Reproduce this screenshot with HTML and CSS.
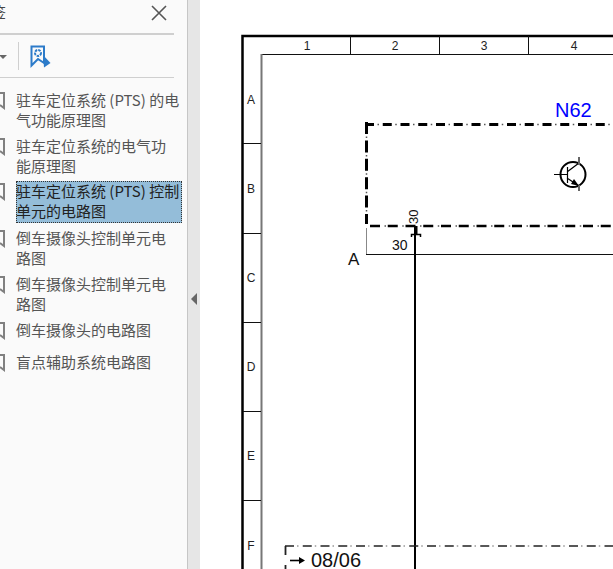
FILE: index.html
```html
<!DOCTYPE html>
<html lang="zh-CN">
<head>
  <meta charset="UTF-8">
  <title>书签</title>
  <link rel="stylesheet" href="styles.css">
</head>
<body>
  <div class="sidebar">
    <div class="panel-head">
      <span class="panel-title">书签</span>
      <svg class="close-icon" width="16" height="16" viewBox="0 0 16 16">
        <path d="M1 1L15 15M15 1L1 15"/>
      </svg>
    </div>
    <div class="panel-tools">
      <span class="caret"></span>
      <span class="tool-sep"></span>
      <svg class="add-mark" width="21" height="24" viewBox="0 0 21 24">
        <path class="ribbon" d="M1.5 1.5H14V18L8 14L1.5 20.5Z"/>
        <circle class="ribbon-gear" cx="8" cy="8" r="3"/>
        <path class="ribbon-arrow" d="M13 10L20.5 18L14 22.5Z"/>
      </svg>
    </div>
    <ul class="marks">
      <li class="mark">
        <svg class="mark-icon" width="5" height="18" viewBox="0 0 5 18"><path d="M-5 1H4V16L0 13"/></svg>
        <span class="mark-text">驻车定位系统 (PTS) 的电气功能原理图</span>
      </li>
      <li class="mark">
        <svg class="mark-icon" width="5" height="18" viewBox="0 0 5 18"><path d="M-5 1H4V16L0 13"/></svg>
        <span class="mark-text">驻车定位系统的电气功能原理图</span>
      </li>
      <li class="mark selected">
        <svg class="mark-icon" width="5" height="18" viewBox="0 0 5 18"><path d="M-5 1H4V16L0 13"/></svg>
        <span class="mark-text">驻车定位系统 (PTS) 控制单元的电路图</span>
      </li>
      <li class="mark">
        <svg class="mark-icon" width="5" height="18" viewBox="0 0 5 18"><path d="M-5 1H4V16L0 13"/></svg>
        <span class="mark-text">倒车摄像头控制单元电路图</span>
      </li>
      <li class="mark">
        <svg class="mark-icon" width="5" height="18" viewBox="0 0 5 18"><path d="M-5 1H4V16L0 13"/></svg>
        <span class="mark-text">倒车摄像头控制单元电路图</span>
      </li>
      <li class="mark">
        <svg class="mark-icon" width="5" height="18" viewBox="0 0 5 18"><path d="M-5 1H4V16L0 13"/></svg>
        <span class="mark-text">倒车摄像头的电路图</span>
      </li>
      <li class="mark">
        <svg class="mark-icon" width="5" height="18" viewBox="0 0 5 18"><path d="M-5 1H4V16L0 13"/></svg>
        <span class="mark-text">盲点辅助系统电路图</span>
      </li>
    </ul>
  </div>

  <div class="splitter"><span class="collapse"></span></div>

  <div class="viewer">
    <!-- viewBox starts at x=200 so drawing coords are the same as the window -->
    <svg class="sheet" width="413" height="569" viewBox="200 0 413 569">
      <path class="frame" d="M242.5 569V36H613"/>
      <path class="frame-thin" d="M261 54.5H613"/>
      <path class="frame-gray" d="M261.5 54V569"/>
      <path class="tick" d="M350.5 36V54M439.5 36V54M528.5 36V54"/>
      <path class="tick" d="M243 143.5H261M243 233.5H261M243 322.5H261M243 411.5H261M243 500.5H261"/>

      <text class="ruler" x="307" y="50">1</text>
      <text class="ruler" x="395" y="50">2</text>
      <text class="ruler" x="484" y="50">3</text>
      <text class="ruler" x="574" y="50">4</text>
      <text class="ruler" x="251" y="104">A</text>
      <text class="ruler" x="251" y="193">B</text>
      <text class="ruler" x="251" y="282">C</text>
      <text class="ruler" x="251" y="371">D</text>
      <text class="ruler" x="251" y="460">E</text>
      <text class="ruler" x="251" y="550">F</text>

      <!-- N62 box: dashes and the thin dots between them are separate strokes -->
      <path class="box-top" d="M365 124.5H613"/>
      <path class="box-dots" d="M377.5 124.5H613"/>
      <path class="box-side" d="M366.5 122V224"/>
      <path class="box-dots-v" d="M366.5 136.5V224"/>
      <path class="box-bottom" d="M370 226H613"/>
      <path class="box-dots" d="M384.5 226H613"/>
      <path class="frame-gray-thin" d="M366.5 228V254"/>
      <path class="frame-thin" d="M366 254.5H613"/>

      <text class="label-blue" x="555" y="117">N62</text>
      <text class="label-a" x="348" y="265">A</text>
      <text class="label-30" x="392" y="250">30</text>
      <text class="label-30-v" transform="translate(418 224) rotate(-90)">30</text>

      <rect class="pin" x="414" y="226" width="3.5" height="8"/>
      <path class="pin-foot" d="M411.5 237V234.5H420.5V237"/>
      <path class="wire" d="M415 235V569"/>

      <circle class="tr-ring" cx="573" cy="174.5" r="12.5"/>
      <path class="tr-line" d="M554 174.5H567M567.5 167V183M567 172L579 163M567 178L579 186"/>
      <path class="tr-gray" d="M579 157V165M579 185V191"/>
      <path class="tr-head" d="M579 186L571 184L574 179Z"/>

      <path class="thin-top" d="M285 546H613"/>
      <path class="thin-dots" d="M297 546H613"/>
      <path class="thin-side" d="M285.5 546V569"/>
      <path class="arrow" d="M290 560.5H302"/>
      <path class="arrow-head" d="M299 557L305 560.5L299 564Z"/>
      <text class="label-sheet" x="311" y="567">08/06</text>
    </svg>
  </div>
</body>
</html>
```
FILE: styles.css
```css
html, body {
  margin: 0;
  height: 100%;
  overflow: hidden;
}
body {
  display: flex;
  width: 613px;
  height: 569px;
  background-color: white;
  font-family: "Noto Sans CJK SC", "Liberation Sans", sans-serif;
}
.sidebar {
  width: 187px;
  flex: none;
  overflow: hidden;
  background-color: #fafafa;
  border-right: 1px solid #c6c6c6;
  color: #555;
}
.panel-head {
  width: 174px;
  height: 35px;
  display: flex;
  align-items: center;
  justify-content: space-between;
  box-sizing: border-box;
  padding: 0 7px 8px 0;
  border-bottom: 2px solid #cfcfcf;
}
.panel-title {
  margin: 0 0 2px -24px;
  font-size: 15px;
  line-height: 24px;
  color: #444;
}
.close-icon path {
  fill: none;
  stroke: #555;
  stroke-width: 1.6;
}
.panel-tools {
  width: 174px;
  height: 43px;
  box-sizing: border-box;
  display: flex;
  align-items: center;
  border-bottom: 1px solid #cfcfcf;
}
.caret {
  width: 0;
  height: 0;
  margin-left: -1px;
  margin-top: 1px;
  border-left: 4px solid transparent;
  border-right: 4px solid transparent;
  border-top: 4px solid #666;
}
.tool-sep {
  width: 1px;
  height: 28px;
  margin-left: 11px;
  background-color: #cfcfcf;
}
.add-mark {
  margin-left: 11px;
  margin-top: 2px;
}
.ribbon {
  fill: none;
  stroke: #2c7bc9;
  stroke-width: 2;
}
.ribbon-gear {
  fill: none;
  stroke: #2c7bc9;
  stroke-width: 2;
  stroke-dasharray: 2.5 1;
}
.ribbon-arrow {
  fill: #2c7bc9;
}
.marks {
  list-style: none;
  margin: 0;
  padding: 12px 0 0;
}
.mark {
  display: flex;
  align-items: flex-start;
  min-height: 26px;
  margin-bottom: 6px;
}
.mark-icon {
  flex: none;
  margin: 2px 11px 0 0;
}
.mark-icon path {
  fill: none;
  stroke: #808080;
  stroke-width: 2;
}
.mark-text {
  width: 166px;
  box-sizing: border-box;
  padding-right: 1.5px;
  font-size: 15px;
  line-height: 20px;
  word-break: break-all;
}
.selected {
  margin-top: -1px;
  margin-bottom: 5px;
}
.selected .mark-text {
  height: 42px;
  background-color: #94bdd9;
  outline: 1px dotted #333;
  outline-offset: -1px;
  color: #222;
}
.splitter {
  width: 12px;
  flex: none;
  display: flex;
  align-items: flex-start;
  background-color: #e6e6e6;
}
.collapse {
  width: 0;
  height: 0;
  margin: 293px 0 0 3px;
  border-top: 6px solid transparent;
  border-bottom: 6px solid transparent;
  border-right: 6px solid #666;
}
.viewer {
  flex: 1;
  background-color: white;
}
.sheet {
  display: block;
  font-family: "Liberation Sans", sans-serif;
}
.frame {
  fill: none;
  stroke: #000;
  stroke-width: 2.5;
}
.frame-thin {
  fill: none;
  stroke: #111;
  stroke-width: 1.2;
}
.frame-gray {
  fill: none;
  stroke: #777;
  stroke-width: 2;
}
.frame-gray-thin {
  fill: none;
  stroke: #888;
  stroke-width: 1;
}
.tick {
  fill: none;
  stroke: #111;
  stroke-width: 1;
}
.ruler {
  font-size: 12px;
  fill: #222;
  text-anchor: middle;
}
.box-top {
  fill: none;
  stroke: #000;
  stroke-width: 3;
  stroke-dasharray: 9 8.75;
}
.box-side {
  fill: none;
  stroke: #000;
  stroke-width: 3;
  stroke-dasharray: 12 6.4;
}
.box-bottom {
  fill: none;
  stroke: #000;
  stroke-width: 2.5;
  stroke-dasharray: 10 7.75;
}
.box-dots {
  fill: none;
  stroke: #555;
  stroke-width: 1.5;
  stroke-dasharray: 1.5 16.25;
}
.box-dots-v {
  fill: none;
  stroke: #555;
  stroke-width: 1.5;
  stroke-dasharray: 1.5 16.9;
}
.thin-top {
  fill: none;
  stroke: #222;
  stroke-width: 1.6;
  stroke-dasharray: 9 8.75;
}
.thin-dots {
  fill: none;
  stroke: #666;
  stroke-width: 1;
  stroke-dasharray: 1.5 16.25;
}
.thin-side {
  fill: none;
  stroke: #222;
  stroke-width: 1.8;
  stroke-dasharray: 9 10;
}
.label-blue {
  font-size: 20px;
  fill: #0000ff;
}
.label-a {
  font-size: 17px;
  fill: #111;
}
.label-30 {
  font-size: 14px;
  fill: #111;
}
.label-30-v {
  font-size: 13px;
  fill: #111;
}
.pin {
  fill: #000;
}
.pin-foot {
  fill: none;
  stroke: #000;
  stroke-width: 1.5;
}
.wire {
  fill: none;
  stroke: #000;
  stroke-width: 2;
}
.tr-ring {
  fill: none;
  stroke: #000;
  stroke-width: 2;
}
.tr-line {
  fill: none;
  stroke: #000;
  stroke-width: 1.2;
}
.tr-gray {
  fill: none;
  stroke: #666;
  stroke-width: 2;
}
.tr-head {
  fill: #000;
}
.arrow {
  fill: none;
  stroke: #000;
  stroke-width: 1.6;
}
.arrow-head {
  fill: #000;
}
.label-sheet {
  font-size: 20px;
  fill: #111;
}
```
